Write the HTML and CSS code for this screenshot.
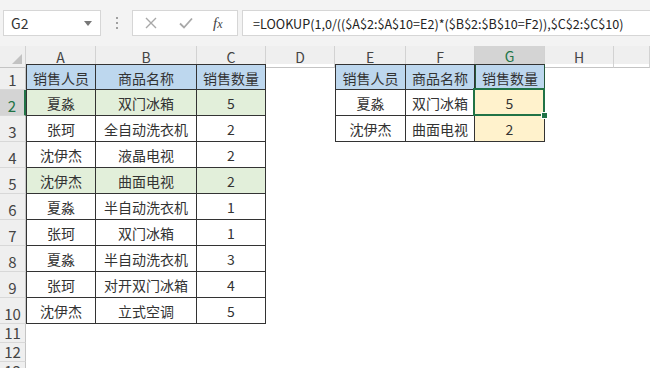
FILE: index.html
```html
<!DOCTYPE html>
<html>
<head>
  <meta charset="utf-8">
  <title>LOOKUP 多条件查找</title>
  <link rel="stylesheet" href="styles.css">
</head>
<body>
  <header class="bar">
    <div class="namebox">G2<i class="caret"></i></div>
    <div class="grip"><b></b><b></b><b></b></div>
    <div class="btns">
      <svg width="12" height="12" viewBox="0 0 12 12"><path d="M1 1L11 11M11 1L1 11" stroke="#a8a8a8" stroke-width="1.4" fill="none"/></svg>
      <svg width="14" height="12" viewBox="0 0 14 12"><path d="M1 6.5L5 10.5L13 1.5" stroke="#a8a8a8" stroke-width="1.8" fill="none"/></svg>
      <span class="fx">f<small>x</small></span>
    </div>
    <div class="formula">=LOOKUP(1,0/(($A$2:$A$10=E2)*($B$2:$B$10=F2)),$C$2:$C$10)</div>
  </header>

  <main class="sheet">
    <div class="row head">
      <div class="corner"></div>
      <div>A</div><div>B</div><div>C</div><div>D</div><div>E</div><div>F</div><div class="sel">G</div><div>H</div><div></div>
    </div>

    <div class="row">
      <div class="rh">1</div>
      <div class="t top lft blue">销售人员</div><div class="t top blue">商品名称</div><div class="t top blue">销售数量</div>
      <div></div>
      <div class="t top lft blue">销售人员</div><div class="t top blue">商品名称</div><div class="t top blue gcol">销售数量</div>
      <div></div><div></div>
    </div>

    <div class="row">
      <div class="rh sel">2</div>
      <div class="t lft green">夏淼</div><div class="t green">双门冰箱</div><div class="t green">5</div>
      <div></div>
      <div class="t lft">夏淼</div><div class="t">双门冰箱</div><div class="t yellow active">5<span class="handle"></span></div>
      <div></div><div></div>
    </div>

    <div class="row">
      <div class="rh">3</div>
      <div class="t lft">张珂</div><div class="t">全自动洗衣机</div><div class="t">2</div>
      <div></div>
      <div class="t lft">沈伊杰</div><div class="t">曲面电视</div><div class="t yellow">2</div>
      <div></div><div></div>
    </div>

    <div class="row">
      <div class="rh">4</div>
      <div class="t lft">沈伊杰</div><div class="t">液晶电视</div><div class="t">2</div>
      <div></div><div></div><div></div><div></div><div></div><div></div>
    </div>

    <div class="row">
      <div class="rh">5</div>
      <div class="t lft green">沈伊杰</div><div class="t green">曲面电视</div><div class="t green">2</div>
      <div></div><div></div><div></div><div></div><div></div><div></div>
    </div>

    <div class="row">
      <div class="rh">6</div>
      <div class="t lft">夏淼</div><div class="t">半自动洗衣机</div><div class="t">1</div>
      <div></div><div></div><div></div><div></div><div></div><div></div>
    </div>

    <div class="row">
      <div class="rh">7</div>
      <div class="t lft">张珂</div><div class="t">双门冰箱</div><div class="t">1</div>
      <div></div><div></div><div></div><div></div><div></div><div></div>
    </div>

    <div class="row">
      <div class="rh">8</div>
      <div class="t lft">夏淼</div><div class="t">半自动洗衣机</div><div class="t">3</div>
      <div></div><div></div><div></div><div></div><div></div><div></div>
    </div>

    <div class="row">
      <div class="rh">9</div>
      <div class="t lft">张珂</div><div class="t">对开双门冰箱</div><div class="t">4</div>
      <div></div><div></div><div></div><div></div><div></div><div></div>
    </div>

    <div class="row">
      <div class="rh">10</div>
      <div class="t lft">沈伊杰</div><div class="t">立式空调</div><div class="t">5</div>
      <div></div><div></div><div></div><div></div><div></div><div></div>
    </div>

    <div class="row short"><div class="rh">11</div></div>
    <div class="row short"><div class="rh">12</div></div>
    <div class="row short"><div class="rh">13</div></div>
  </main>
</body>
</html>
```

FILE: styles.css
```css
html {
  background-color: #fff;
}

body {
  margin: 0;
  font: 14px "Noto Sans CJK SC", "Noto Sans", sans-serif;
  color: #333;
  overflow: hidden;
}

/* formula bar */

.bar {
  background-color: #f3f3f3;
  display: flex;
  align-items: center;
  height: 46px;
  padding: 10px 0 10px 3px;
  box-sizing: border-box;
}

.namebox {
  background-color: #fff;
  border: 1px solid #d6d6d6;
  box-sizing: border-box;
  width: 98px;
  height: 26px;
  display: flex;
  align-items: center;
  padding-left: 7px;
  position: relative;
}

.caret {
  position: absolute;
  right: 8px;
  top: 10px;
  border-left: 4px solid transparent;
  border-right: 4px solid transparent;
  border-top: 5px solid #777;
}

.grip {
  width: 31px;
  display: flex;
  flex-direction: column;
  align-items: center;
  gap: 3px;
}

.grip b {
  width: 2px;
  height: 2px;
  background-color: #a0a0a0;
}

.btns {
  background-color: #fff;
  border: 1px solid #d6d6d6;
  box-sizing: border-box;
  width: 106px;
  height: 26px;
  display: flex;
  align-items: center;
  padding-left: 12px;
}

.btns svg:first-child {
  margin-right: 22px;
}

.btns svg:nth-child(2) {
  margin-right: 20px;
}

.fx {
  font: italic 15px "Liberation Serif", serif;
  color: #444;
}

.fx small {
  font-size: 12px;
}

.formula {
  flex: 1;
  margin-left: 4px;
  background-color: #fff;
  border: 1px solid #d6d6d6;
  border-right: 0;
  box-sizing: border-box;
  height: 26px;
  display: flex;
  align-items: center;
  padding-left: 10px;
  font-size: 12.6px;
  color: #222;
  white-space: nowrap;
}

/* sheet */

.row {
  display: grid;
  grid-template-columns: 26px 70px 101px 69px 69px 71px 69px 70px 69px 1fr;
  height: 26px;
}

.row > div {
  box-sizing: border-box;
  display: flex;
  align-items: center;
  justify-content: center;
  padding-top: 1px;
}

.row.short {
  height: 19px;
}

.head {
  height: 18px;
  background-color: #efefef;
  color: #444;
}

.head > div {
  border-right: 1px solid #d2d2d2;
  border-bottom: 1px solid #c4c4c4;
  padding-top: 0;
}

.head .sel {
  background-color: #d4d4d4;
  color: #217346;
  border-bottom: 2px solid #217346;
}

.corner {
  position: relative;
}

.corner::after {
  content: "";
  position: absolute;
  right: 3px;
  bottom: 3px;
  border-left: 10px solid transparent;
  border-bottom: 10px solid #c2c2c2;
}

.rh {
  background-color: #efefef;
  border-right: 1px solid #c4c4c4;
  border-bottom: 1px solid #d8d8d8;
  color: #444;
  align-items: flex-end !important;
  line-height: 1;
  padding: 0 0 2px !important;
  font-size: 15px;
}

.rh.sel {
  background-color: #d4d4d4;
  color: #217346;
  border-right: 2px solid #217346;
}

.t {
  border-right: 1px solid #333;
  border-bottom: 1px solid #333;
  background-color: #fff;
}

.t.top {
  border-top: 1px solid #333;
}

.t.lft {
  border-left: 1px solid #333;
}

.blue {
  background-color: #bdd7ee;
}

.green {
  background-color: #e2efda;
}

.yellow {
  background-color: #fff2cc;
}

.gcol {
  border-left: 1px solid #24583a;
  border-right-color: #24583a;
}

.active {
  position: relative;
}

.active::before {
  content: "";
  position: absolute;
  left: -2px;
  top: -2px;
  right: -1px;
  bottom: -1px;
  border: 2px solid #217346;
}

.handle {
  position: absolute;
  right: -4px;
  bottom: -4px;
  width: 5px;
  height: 5px;
  background-color: #217346;
  border: 1px solid #fff;
  z-index: 1;
}
```
